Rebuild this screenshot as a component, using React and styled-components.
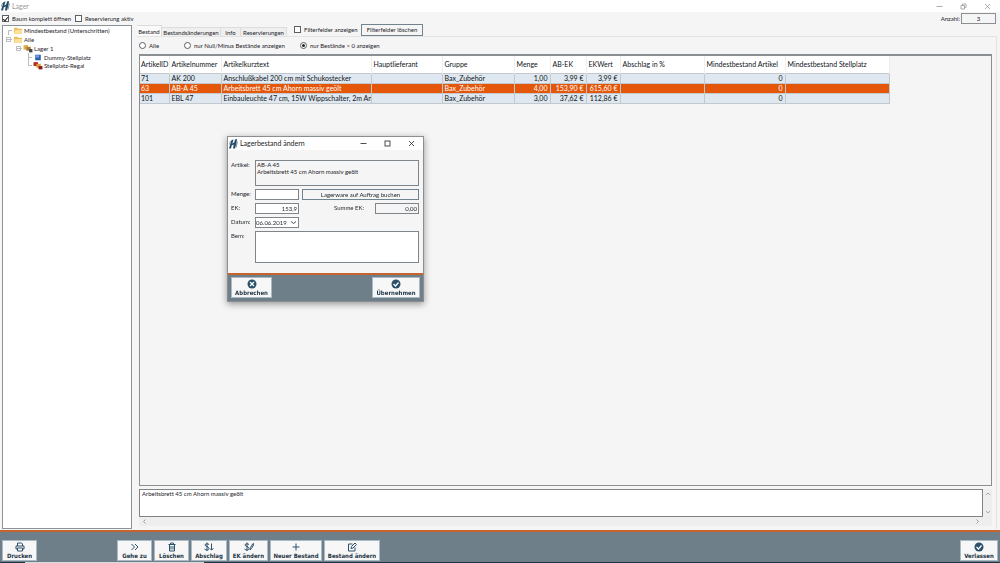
import React from "react";
import styled, { createGlobalStyle, css } from "styled-components";

const Global = createGlobalStyle`
  * { box-sizing: border-box; }
  html, body { margin: 0; }
  body, button, input, textarea {
    font-family: Lato, "Liberation Sans", sans-serif;
    font-variant-ligatures: none;
    font-size: 6px;
    line-height: 7px;
    color: #1d2328;
  }
`;

const Screen = styled.div`
  display: flex;
  flex-direction: column;
  min-height: 100vh;
  background: #f5f5f5;
`;

const TitleBar = styled.header`
  display: flex;
  align-items: center;
  gap: 2px;
  height: ${p => p.$dialog ? 13 : 12}px;
  padding: 0 ${p => p.$dialog ? 8 : 9}px 0 1px;
  background: #fff;
  color: ${p => p.$dialog ? "#222" : "#999"};
  h1, h2 { flex: 1; margin: 0; font-size: 7px; font-weight: normal; }
`;

const WindowButtons = styled.div`
  display: flex;
  gap: 17px;
  button { display: flex; padding: 0; border: 0; background: none; color: inherit; }
`;

const Logo = () => (
  <svg width="9" height="10" viewBox="0 0 18 20" aria-hidden="true">
    <path d="M5 2 9 1 7 8 5 15 4 19 0 19ZM12 1 16 0 15 8 12 19 8 19 9 13Z" fill="#244b66" />
    <path d="M6 11 12 8" stroke="#244b66" strokeWidth="3" />
    <path d="M3 4 1 11M17 5 14 17" stroke="#7895a8" strokeWidth="2" />
  </svg>
);

const Glyph = ({ kind, size = 7 }) => (
  <svg width={size} height={size} viewBox="0 0 14 14" fill="none" stroke="currentColor" strokeWidth="1.6" aria-hidden="true">
    {kind === "min" && <path d="M1 7h12" />}
    {kind === "max" && <rect x="2" y="2" width="10" height="10" />}
    {kind === "restore" && <path d="M2 5h7v7H2zM5 5V2h7v7H9" />}
    {kind === "close" && <path d="m2 2 10 10M12 2 2 12" />}
    {kind === "left" && <path d="M9 3 5 7l4 4" />}
    {kind === "right" && <path d="m5 3 4 4-4 4" />}
    {kind === "up" && <path d="m2 9 5-4 5 4" />}
    {kind === "down" && <path d="m2 5 5 4 5-4" />}
  </svg>
);

const Options = styled.div`
  display: grid;
  grid-template-columns: 73px auto 1fr;
  align-items: center;
  height: 13px;
  padding: 0 4px 0 2px;
`;

const Check = styled.label`
  display: flex;
  align-items: center;
  gap: 3px;
  white-space: nowrap;
  input {
    appearance: none;
    display: grid;
    flex: none;
    place-items: center;
    width: 7px;
    height: 7px;
    margin: 0;
    border: 1px solid #5b6065;
    border-radius: ${p => p.$radio ? "50%" : 0};
    background: #fff;
  }
  input:checked::after {
    content: "";
    ${p => p.$radio
      ? css`width: 3px; height: 3px; border-radius: 50%; background: #222;`
      : css`width: 2px; height: 4px; border: solid #222; border-width: 0 1px 1px 0; transform: rotate(40deg);`}
  }
`;

const Count = styled.label`
  display: flex;
  align-items: center;
  gap: 1px;
  margin-left: auto;
  input {
    width: 35px;
    height: 11px;
    padding: 0;
    border: 1px solid #8a8f94;
    background: #f5f5f5;
    text-align: center;
  }
`;

const Main = styled.main`
  display: flex;
  flex: 1;
  gap: 5px;
  padding: 0 3px 1px 2px;
`;

const Tree = styled.nav`
  flex: 0 0 130px;
  padding: 0 2px;
  border: 1px solid #8b9298;
  background: #fff;
  ul { margin: 0; padding: 0; list-style: none; }
`;

const TreeItem = styled.li`
  display: flex;
  align-items: center;
  gap: 1px;
  height: ${p => p.$level === 2 ? 8 : 9}px;
  padding-left: ${p => p.$level * 10}px;
  white-space: nowrap;
`;

const TreeIcon = ({ kind }) => (
  <svg width="10" height="9" viewBox="0 0 18 16" aria-hidden="true">
    {kind === "folder" && <><path d="M2 3h5l2 2h7v9H2z" fill="#e9bd53" /><path d="M4 7h13l-2 7H2z" fill="#fbe29a" /></>}
    {kind === "store" && <><path d="M1 2h8v8H1z" fill="#e2ad43" /><path d="M6 5h8v7H6z" fill="#a87a37" /><path d="M11 9h6v6h-6z" fill="#444" /></>}
    {kind === "place" && <><path d="M4 3h10v10H4z" fill="#2c62ad" /><path d="M5 4h6v4H5z" fill="#76a5df" /></>}
    {kind === "shelf" && <><path d="M1 2h8v7H1z" fill="#b52620" /><path d="M6 5h8v7H6z" fill="#dc9a3c" /><path d="M10 9h7v6h-7z" fill="#8f1916" /></>}
  </svg>
);

const Branch = ({ shape }) => (
  <svg width="7" height="9" viewBox="0 0 7 9" fill="none" stroke="#bbb" aria-hidden="true">
    {shape === "open" && <path d="M1.500 2.500h4v4h-4zM2 4.500h3M5 4.500h2" />}
    {shape === "first" && <path d="M3.500 9v-4.500h4" />}
    {shape === "middle" && <path d="M3.500 0v9M3.500 4.500h4" />}
    {shape === "last" && <path d="M3.500 0v4.500h4" />}
  </svg>
);

const Workspace = styled.section`
  display: flex;
  flex-direction: column;
  flex: 1;
  min-width: 0;
`;

const TabRow = styled.div`
  display: flex;
  align-items: flex-end;
  height: 11px;
`;

const Tab = styled.button`
  height: ${p => p.$active ? 11 : 9}px;
  width: ${p => p.$width}px;
  padding: 0;
  border: 1px solid #dcdcdc;
  border-width: 1px 1px 0 0;
  background: ${p => p.$active ? "#fafafa" : "#efefef"};
  white-space: nowrap;
`;

const Filters = styled.div`
  display: grid;
  grid-template-columns: 67px auto;
  align-items: center;
  height: 13px;
  margin-left: 7px;
`;

const PlainButton = styled.button`
  width: ${p => p.$width}px;
  height: ${p => p.$height}px;
  padding: 0;
  border: 1px solid #71838f;
  background: #f5f5f5;
`;

const Page = styled.div`
  display: flex;
  flex-direction: column;
  flex: 1;
  padding: 0 4px 3px 2px;
  border: 1px solid #e3e3e3;
  border-width: 1px 1px 0 0;
`;

const Radios = styled.div`
  display: grid;
  grid-template-columns: 45px 116px auto;
  align-items: center;
  height: 17px;
`;

const GridPanel = styled.div`
  flex: 1;
  border: 1px solid #8b8f92;
  border-top-width: 2px;
`;

const Table = styled.table`
  width: 749px;
  table-layout: fixed;
  border-collapse: collapse;
  font-size: 7px;
  line-height: 8px;
  color: #101418;
  th, td {
    height: 10px;
    padding: 0 2px 0 1px;
    overflow: hidden;
    white-space: nowrap;
    text-align: left;
    font-weight: normal;
  }
  th { height: 17px; background: #fff; border-right: 1px solid #eee; }
  td { border: 1px solid #c2c8cc; border-left: 0; }
  th:nth-child(n + 2), td:nth-child(n + 2) { padding-left: 2px; }
`;

const Row = styled.tr`
  background: ${p => p.$selected ? "#e4570b" : "#dfe8f0"};
  color: ${p => p.$selected ? "#fff" : "#101418"};
  td:nth-child(n + 6):nth-child(-n + 10) { text-align: right; }
`;

const Memo = styled.div`
  display: grid;
  grid-template: 28px 9px / 1fr 9px;
  margin-top: 3px;
  background: #eee;
  color: #888;
  textarea {
    width: 100%;
    height: 100%;
    padding: 0 2px;
    border: 1px solid #7e8386;
    background: #fff;
    resize: none;
  }
`;

const Scroll = styled.div`
  display: flex;
  flex-direction: ${p => p.$vertical ? "column" : "row"};
  align-items: center;
  justify-content: space-between;
  padding: 2px;
`;

const Footer = styled.footer`
  display: flex;
  align-items: flex-start;
  gap: 2px;
  height: ${p => p.$dialog ? 28 : 32}px;
  padding: ${p => p.$dialog ? "2px 3px" : "8px 2px 0"};
  border-top: 2px solid #c5642e;
  background: #6e7f89;
`;

const BottomEdge = styled.div`
  height: 1px;
  background: linear-gradient(to right, #1d3445 25px, #d5dadd 25px 204px, #1d3445 204px);
`;

const Action = styled.button`
  display: flex;
  flex-direction: column;
  align-items: center;
  justify-content: center;
  width: ${p => p.$width}px;
  height: 21px;
  margin-left: ${p => p.$push || 0};
  padding: 0;
  border: 1px solid #a9bac5;
  background: #f7f7f7;
  color: #1f3545;
  font-family: "DejaVu Sans Condensed", "DejaVu Sans", sans-serif;
  font-stretch: condensed;
  font-weight: bold;
  white-space: nowrap;
  svg { color: #2b506a; }
`;

const ActionIcon = ({ kind }) => (
  <svg width="10" height="10" viewBox="0 0 20 20" fill="none" stroke="currentColor" strokeWidth="2" aria-hidden="true">
    {kind === "print" && <path d="M5 8V2h8l2 2v4M5 14H2V8h16v6h-3M5 12h10v6H5z" />}
    {kind === "go" && <path d="m3 4 6 6-6 6M10 4l6 6-6 6" />}
    {kind === "trash" && <path d="M3 5h14M7 5V2h6v3M5 5v13h10V5M8 8v7M12 8v7" />}
    {kind === "discount" && <path d="M10 5C8 3 2 3 2 6s8 3 8 7-6 4-9 1M6 1v17M15 3v13M12 13l3 3 4-3" />}
    {kind === "price" && <path d="M10 5C8 3 2 3 2 6s8 3 8 7-6 4-9 1M6 1v17M12 16l1-5 5-8 2 1-5 9-3 3" />}
    {kind === "plus" && <path d="M10 3v14M3 10h14" />}
    {kind === "edit" && <path d="M11 4H3v14h13v-7M8 13l1-4 7-7 3 3-7 7z" />}
    {kind === "cancel" && <><circle cx="10" cy="10" r="9" fill="currentColor" stroke="none" /><path d="m6 6 8 8M14 6l-8 8" stroke="#fff" strokeWidth="2.500" /></>}
    {kind === "ok" && <><circle cx="10" cy="10" r="9" fill="currentColor" stroke="none" /><path d="m5 10 4 4 6-7" stroke="#fff" strokeWidth="2.500" /></>}
  </svg>
);

const Dialog = styled.section`
  position: absolute;
  left: 227px;
  top: 136px;
  width: 197px;
  border: 1px solid #8b8f92;
  background: #f5f5f5;
  box-shadow: 0 2px 7px rgba(0, 0, 0, 0.4);
`;

const Form = styled.form`
  display: grid;
  grid-template-columns: 21px 44px 1fr 44px;
  gap: 3px;
  padding: 10px 4px 10px 3px;
  textarea { grid-column: 2 / -1; }
`;

const Label = styled.label`
  grid-column: ${p => p.$inner ? "auto" : 1};
  padding: 1px ${p => p.$inner ? 8 : 0}px 0 0;
  text-align: ${p => p.$inner ? "right" : "left"};
`;

const field = css`
  width: 100%;
  height: ${p => p.$height || 11}px;
  padding: 0 1px;
  border: 1px solid #7f868b;
  background: ${p => p.$flat ? "#f5f5f5" : "#fff"};
  outline: none;
`;
const Input = styled.input`${field} text-align: right;`;
const Area = styled.textarea`${field} display: block; resize: none;`;
const DateBox = styled.div`
  display: flex;
  align-items: center;
  padding-right: 1px;
  border: 1px solid #7f868b;
  background: #fff;
  input { flex: 1; min-width: 0; height: 9px; padding: 0; border: 0; }
  button { display: flex; padding: 0; border: 0; background: none; }
`;
const Wide = styled.div`grid-column: span 2; display: grid;`;

const columns = [
  ["ArtikelID", 29], ["Artikelnummer", 52], ["Artikelkurztext", 150], ["Hauptlieferant", 71],
  ["Gruppe", 72], ["Menge", 36], ["AB-EK", 36], ["EKWert", 34], ["Abschlag in %", 84],
  ["Mindestbestand Artikel", 81], ["Mindestbestand Stellplatz", 104],
];
const rows = [
  ["71", "AK 200", "Anschlußkabel 200 cm mit Schukostecker", "", "Bax_Zubehör", "1,00", "3,99 €", "3,99 €", "", "0", ""],
  ["63", "AB-A 45", "Arbeitsbrett 45 cm Ahorn massiv geölt", "", "Bax_Zubehör", "4,00", "153,90 €", "615,60 €", "", "0", ""],
  ["101", "EBL 47", "Einbauleuchte 47 cm, 15W Wippschalter, 2m Ansc", "", "Bax_Zubehör", "3,00", "37,62 €", "112,86 €", "", "0", ""],
];
const tabs = [["Bestand", 25], ["Bestandsänderungen", 59], ["Info", 20], ["Reservierungen", 46]];
const actions = [
  ["Gehe zu", "go", 35], ["Löschen", "trash", 35], ["Abschlag", "discount", 36],
  ["EK ändern", "price", 39], ["Neuer Bestand", "plus", 52], ["Bestand ändern", "edit", 56],
];
const tree = [
  ["Mindestbestand (Unterschritten)", "folder", 0, "first"], ["Alle", "folder", 0, "open"],
  ["Lager 1", "store", 1, "open"], ["Dummy-Stellplatz", "place", 2, "middle"], ["Stellplatz-Regal", "shelf", 2, "last"],
];

export default function App() {
  return (
    <Screen>
      <Global />
      <TitleBar>
        <Logo /><h1>Lager</h1>
        <WindowButtons>
          <button aria-label="Minimieren"><Glyph kind="min" /></button>
          <button aria-label="Verkleinern"><Glyph kind="restore" /></button>
          <button aria-label="Schließen"><Glyph kind="close" /></button>
        </WindowButtons>
      </TitleBar>
      <Options>
        <Check><input type="checkbox" defaultChecked />Baum komplett öffnen</Check>
        <Check><input type="checkbox" />Reservierung aktiv</Check>
        <Count>Anzahl:<input readOnly value="3" /></Count>
      </Options>
      <Main>
        <Tree>
          <ul>
            {tree.map(([name, icon, level, shape]) => (
              <TreeItem key={name} $level={level}><Branch shape={shape} /><TreeIcon kind={icon} />{name}</TreeItem>
            ))}
          </ul>
        </Tree>
        <Workspace>
          <TabRow>
            {tabs.map(([name, width], i) => <Tab key={name} $active={i === 0} $width={width}>{name}</Tab>)}
            <Filters>
              <Check><input type="checkbox" />Filterfelder anzeigen</Check>
              <PlainButton $width={62} $height={12}>Filterfelder löschen</PlainButton>
            </Filters>
          </TabRow>
          <Page>
            <Radios>
              <Check $radio><input type="radio" name="bestand" />Alle</Check>
              <Check $radio><input type="radio" name="bestand" />nur Null/Minus Bestände anzeigen</Check>
              <Check $radio><input type="radio" name="bestand" defaultChecked />nur Bestände &gt; 0 anzeigen</Check>
            </Radios>
            <GridPanel>
              <Table>
                <colgroup>{columns.map(([name, width]) => <col key={name} width={width} />)}</colgroup>
                <thead><tr>{columns.map(([name]) => <th key={name}>{name}</th>)}</tr></thead>
                <tbody>
                  {rows.map((row, i) => (
                    <Row key={row[0]} $selected={i === 1}>{row.map((cell, j) => <td key={j}>{cell}</td>)}</Row>
                  ))}
                </tbody>
              </Table>
            </GridPanel>
            <Memo>
              <textarea aria-label="Artikeltext" readOnly value="Arbeitsbrett 45 cm Ahorn massiv geölt" />
              <Scroll $vertical><Glyph kind="up" size={6} /><Glyph kind="down" size={6} /></Scroll>
              <Scroll><Glyph kind="left" /><Glyph kind="right" /></Scroll>
            </Memo>
          </Page>
        </Workspace>
      </Main>
      <Footer>
        <Action $width={35}><ActionIcon kind="print" />Drucken</Action>
        {actions.map(([name, icon, width], i) => (
          <Action key={name} $width={width} $push={i === 0 ? "78px" : 0}><ActionIcon kind={icon} />{name}</Action>
        ))}
        <Action $width={38} $push="auto"><ActionIcon kind="ok" />Verlassen</Action>
      </Footer>
      <BottomEdge />
      <Dialog role="dialog" aria-labelledby="dialog-title">
        <TitleBar $dialog>
          <Logo /><h2 id="dialog-title">Lagerbestand ändern</h2>
          <WindowButtons>
            <button aria-label="Minimieren"><Glyph kind="min" /></button>
            <button aria-label="Maximieren"><Glyph kind="max" /></button>
            <button aria-label="Schließen"><Glyph kind="close" /></button>
          </WindowButtons>
        </TitleBar>
        <Form>
          <Label htmlFor="artikel">Artikel:</Label>
          <Area id="artikel" $height={26} $flat readOnly value={"AB-A 45\nArbeitsbrett 45 cm Ahorn massiv geölt"} />
          <Label htmlFor="menge">Menge:</Label>
          <Input id="menge" autoFocus />
          <Wide><PlainButton type="button" $height={11}>Lagerware auf Auftrag buchen</PlainButton></Wide>
          <Label htmlFor="ek">EK:</Label>
          <Input id="ek" defaultValue="153,9" />
          <Label htmlFor="summe" $inner>Summe EK:</Label>
          <Input id="summe" $flat readOnly value="0,00" />
          <Label htmlFor="datum">Datum:</Label>
          <DateBox><input id="datum" defaultValue="06.06.2019" /><button type="button" aria-label="Kalender"><Glyph kind="down" /></button></DateBox>
          <Label htmlFor="bem">Bem:</Label>
          <Area id="bem" $height={32} />
        </Form>
        <Footer $dialog>
          <Action $width={41}><ActionIcon kind="cancel" />Abbrechen</Action>
          <Action $width={48} $push="auto"><ActionIcon kind="ok" />Übernehmen</Action>
        </Footer>
      </Dialog>
    </Screen>
  );
}
